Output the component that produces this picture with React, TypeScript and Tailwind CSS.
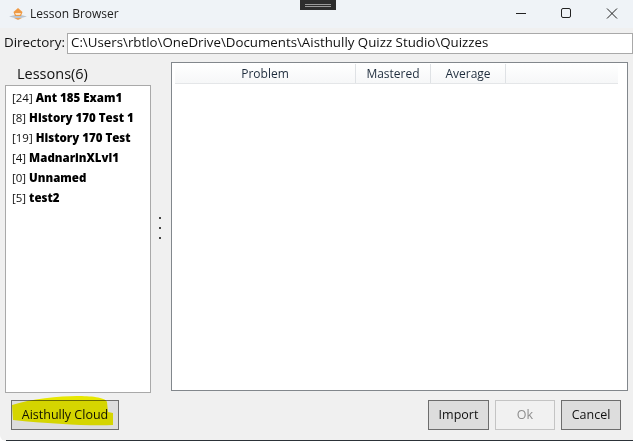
import React from 'react';

const lessons = [
  { count: 24, name: 'Ant 185 Exam1' },
  { count: 8, name: 'History 170 Test 1' },
  { count: 19, name: 'History 170 Test' },
  { count: 4, name: 'MadnarinXLvl1' },
  { count: 0, name: 'Unnamed' },
  { count: 5, name: 'test2' },
];

const App: React.FC = () => {
  return (
    <div className="relative w-[633px] h-[441px] overflow-hidden rounded-bl-[6px] bg-[#f0f0f0] text-[#111] font-['Open_Sans','Noto_Sans',sans-serif]">
      {/* title bar */}
      <div className="flex items-center h-[28px] bg-[#eff3f7] pl-[9px]">
        <svg width="18" height="14" viewBox="0 0 18 14" className="shrink-0">
          <path d="M0 9.5 L6 8 L12 8 L18 9.5 L12 11 L6 11 Z" fill="#b9c4d0" />
          <path d="M9 1 L13.5 5 L12 9 L6 9 L4.500 5 Z" fill="#ef9a45" />
          <path d="M6 6 L12 6 L11 8 L7 8 Z" fill="#fbe3c4" />
          <path d="M5 11 L13 11 L9 13 Z" fill="#e9a25c" />
        </svg>
        <span className="ml-[3px] text-[12px] text-[#222]">Lesson Browser</span>
        <div className="ml-auto flex items-center">
          <svg width="46" height="28" viewBox="0 0 46 28">
            <path d="M21 13.500 H31" stroke="#222" strokeWidth="1" />
          </svg>
          <svg width="46" height="28" viewBox="0 0 46 28">
            <rect x="20.500" y="8.500" width="9" height="9" rx="1.500" fill="none" stroke="#222" strokeWidth="1" />
          </svg>
          <svg width="46" height="28" viewBox="0 0 46 28">
            <path d="M20 8.500 L30 18.500 M30 8.500 L20 18.500" stroke="#222" strokeWidth="1" />
          </svg>
        </div>
      </div>

      {/* directory */}
      <div className="flex items-center h-[22px] mt-[4px] pl-[4px]">
        <span className="w-[63px] shrink-0 text-[13.400px] leading-none">Directory:</span>
        <div className="flex items-center flex-1 h-[21px] bg-white border border-[#a9a9a9] pl-[3px] text-[13.300px] whitespace-nowrap">
          {'C:\\Users\\rbtlo\\OneDrive\\Documents\\Aisthully Quizz Studio\\Quizzes'}
        </div>
      </div>

      {/* body */}
      <div className="flex h-[331px] mt-[8px] pl-[5px] pr-[5px]">
        <div className="flex flex-col w-[146px] shrink-0">
          <div className="h-[23px] pl-[12px] pt-[2px] text-[14.500px] leading-[20px]">Lessons(6)</div>
          <ul className="h-[308px] bg-white border border-[#a9a9a9] pl-[6px] pt-[2px] text-[11.500px]">
            {lessons.map((lesson) => (
              <li key={lesson.name} className="h-[20px] leading-[20px] whitespace-nowrap">
                [{lesson.count}] <span className="font-extrabold text-black">{lesson.name}</span>
              </li>
            ))}
          </ul>
        </div>

        {/* splitter */}
        <div className="flex flex-col items-center justify-center gap-[8px] w-[20px] shrink-0 pr-[2px]">
          <div className="w-[2px] h-[2px] bg-[#444]" />
          <div className="w-[2px] h-[2px] bg-[#444]" />
          <div className="w-[2px] h-[2px] bg-[#444]" />
        </div>

        <div className="flex-1 h-[329px] bg-white border border-[#82878c] pt-[1px] pl-[3px] pr-[3px]">
          <div className="flex h-[20px] w-[443px] border-b border-[#e4e6e8] bg-gradient-to-b from-white to-[#f6f7f8] text-[12px] text-[#1f2d3d]">
            <div className="flex items-center justify-center w-[181px] border-r border-[#dfe2e5]">Problem</div>
            <div className="flex items-center justify-center w-[75px] border-r border-[#dfe2e5]">Mastered</div>
            <div className="flex items-center justify-center w-[75px] border-r border-[#dfe2e5]">Average</div>
          </div>
        </div>
      </div>

      {/* footer buttons */}
      <div className="flex items-start mt-[7px] pl-[11px] pr-[12px]">
        <button className="w-[108px] h-[30px] bg-[#dddddd] border border-[#6d6d6d] text-[12.500px]">Aisthully Cloud</button>
        <div className="ml-auto flex gap-[6px]">
          <button className="w-[61px] h-[30px] bg-[#dddddd] border border-[#6d6d6d] text-[12.500px]">Import</button>
          <button disabled className="w-[60px] h-[30px] bg-[#f1f1f1] border border-[#c4c4c4] text-[12.500px] text-[#8d8d8d]">Ok</button>
          <button className="w-[60px] h-[30px] bg-[#dddddd] border border-[#6d6d6d] text-[12.500px]">Cancel</button>
        </div>
      </div>

      {/* yellow marker over the cloud button */}
      <svg className="absolute left-0 top-[390px] mix-blend-multiply" width="125" height="45" viewBox="0 0 125 45">
        <path d="M12 15 C30 9 60 6 77 6 C90 6 105 7 107 12 L108 22 L113 23 L113 35 C90 36 50 34 13 30 Z" fill="#f6f600" />
      </svg>

      {/* top overlay from another window */}
      <div className="absolute left-[300px] top-0 w-[36px] h-[10px] bg-[#2d2d2d] flex flex-col items-center justify-center gap-[1px]">
        <div className="w-[26px] h-px bg-[#999]" />
        <div className="w-[26px] h-px bg-[#999]" />
      </div>

      {/* desktop edge */}
      <div className="absolute left-[6px] right-0 bottom-0 h-px bg-[#2c3238]" />
    </div>
  );
};

export default App;
